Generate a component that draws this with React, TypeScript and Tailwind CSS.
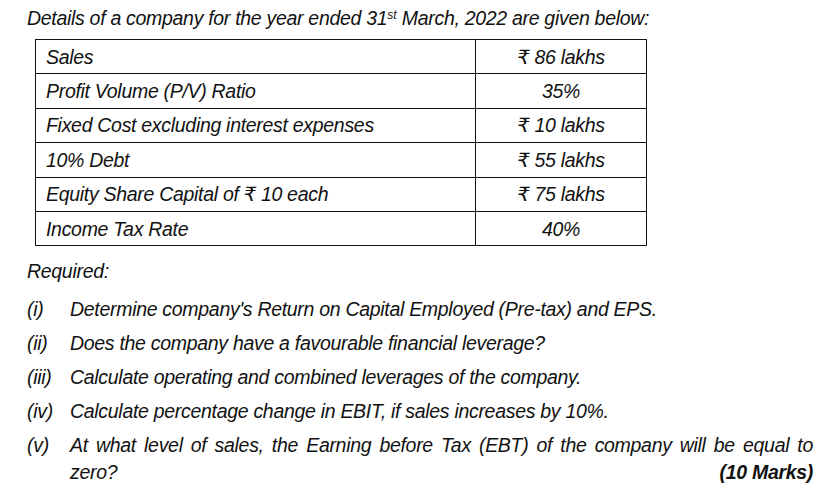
const rows: [string, string][] = [
  ['Sales', '₹ 86 lakhs'],
  ['Profit Volume (P/V) Ratio', '35%'],
  ['Fixed Cost excluding interest expenses', '₹ 10 lakhs'],
  ['10% Debt', '₹ 55 lakhs'],
  ['Equity Share Capital of ₹ 10 each', '₹ 75 lakhs'],
  ['Income Tax Rate', '40%'],
];

const items: [string, string][] = [
  ['(i)', "Determine company's Return on Capital Employed (Pre-tax) and EPS."],
  ['(ii)', 'Does the company have a favourable financial leverage?'],
  ['(iii)', 'Calculate operating and combined leverages of the company.'],
  ['(iv)', 'Calculate percentage change in EBIT, if sales increases by 10%.'],
];

export default function App() {
  return (
    <div
      className="w-[835px] h-[499px] bg-white text-[#111] italic pl-[27px] pr-[22px] pt-[5px] text-[19.5px] leading-[26px] tracking-[-0.3px]"
      style={{ fontFamily: '"Liberation Sans", "DejaVu Sans", sans-serif' }}
    >
      <p>
        Details of a company for the year ended 31<sup className="text-[12px] tracking-normal">st</sup> March, 2022 are given below:
      </p>

      <table className="ml-[8px] mt-[8px] w-[612px] border-collapse">
        <tbody>
          {rows.map(([label, value]) => (
            <tr key={label} className="h-[34.4px]">
              <td className="w-[440px] border border-[#111] px-[10px]">{label}</td>
              <td className="border border-[#111] text-center">{value}</td>
            </tr>
          ))}
        </tbody>
      </table>

      <p className="mt-[12px]">Required:</p>

      <div className="mt-[12px] flex flex-col gap-[8px]">
        {items.map(([num, text]) => (
          <div key={num} className="flex">
            <span className="w-[43px] shrink-0">{num}</span>
            <span>{text}</span>
          </div>
        ))}
        <div className="flex">
          <span className="w-[43px] shrink-0">(v)</span>
          <div className="flex-1 leading-[27px]">
            <p className="text-justify [text-align-last:justify]">
              At what level of sales, the Earning before Tax (EBT) of the company will be equal to
            </p>
            <div className="flex justify-between">
              <span>zero?</span>
              <span className="font-bold">(10 Marks)</span>
            </div>
          </div>
        </div>
      </div>
    </div>
  );
}
